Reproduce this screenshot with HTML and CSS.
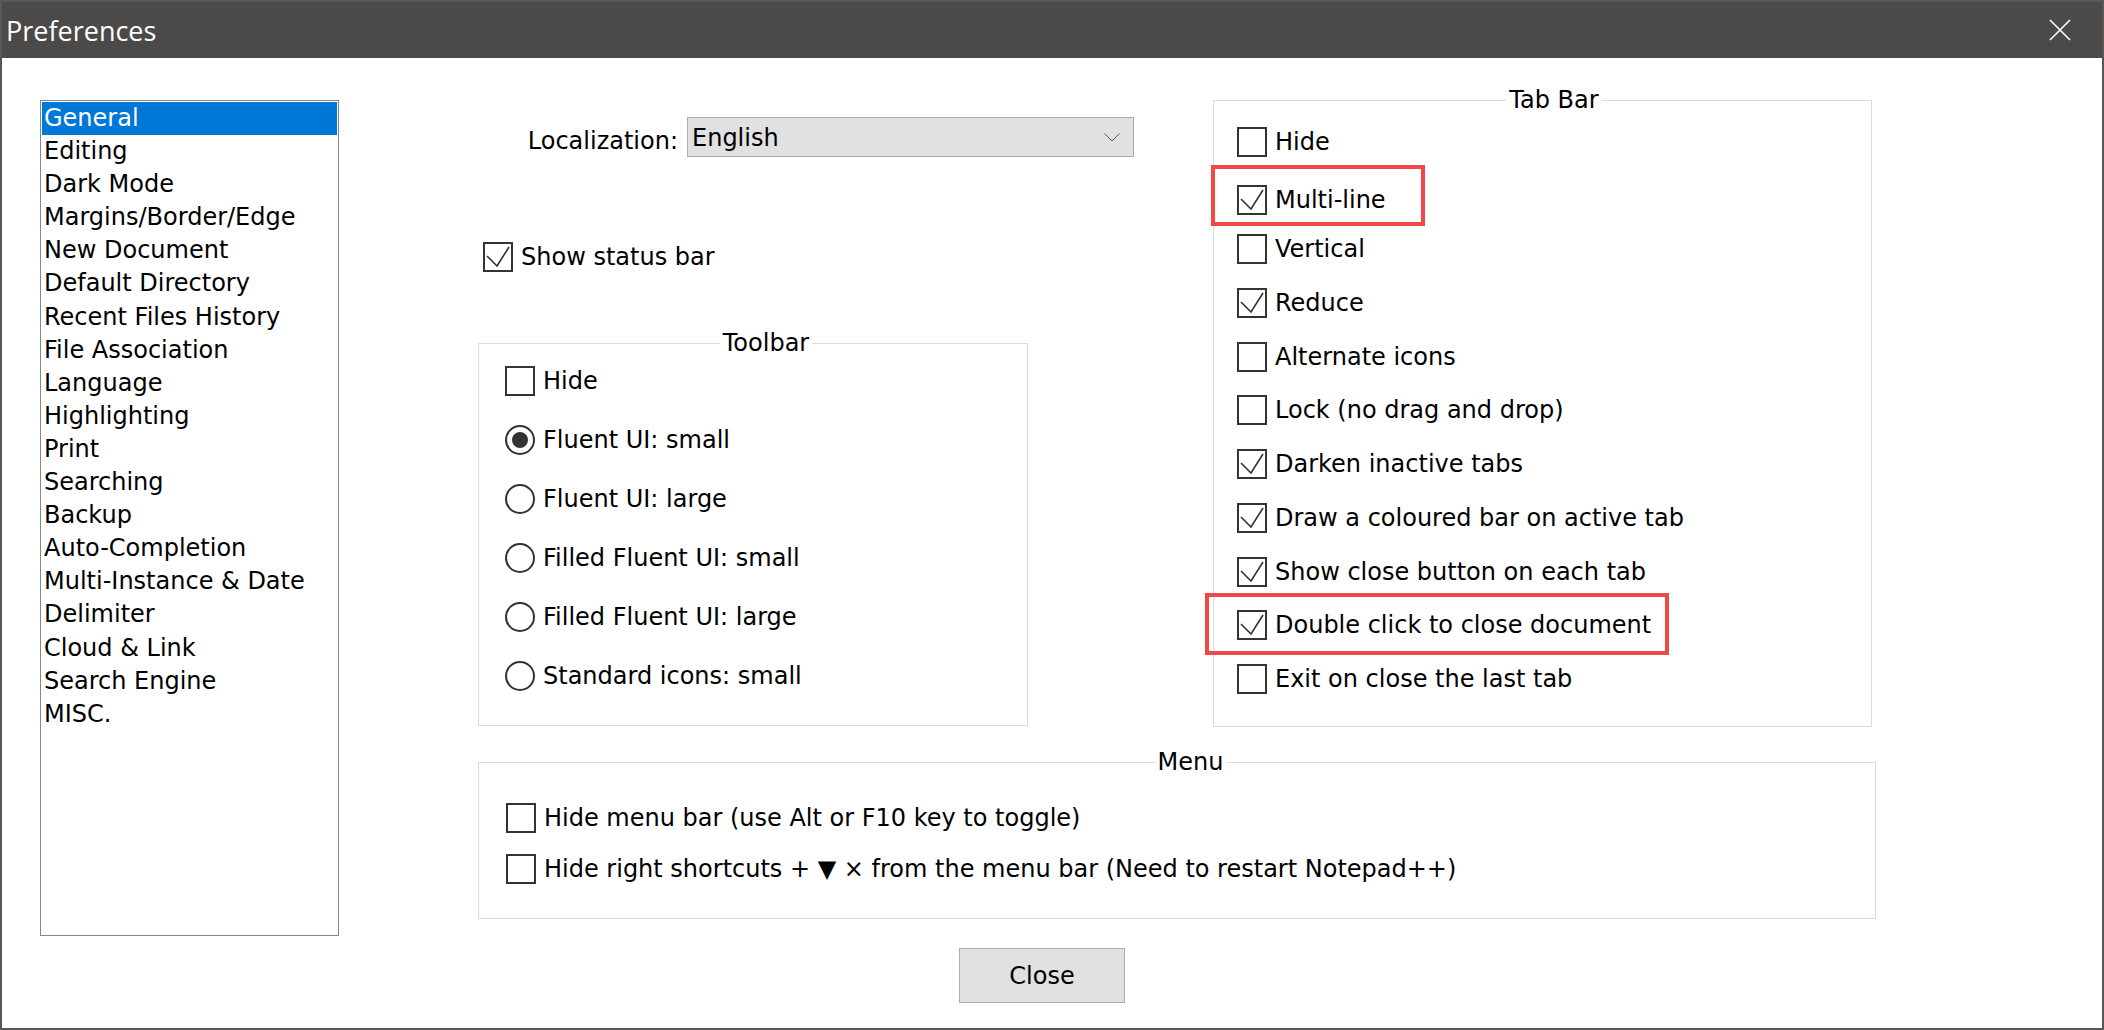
FILE: index.html
```html
<!DOCTYPE html>
<html>
<head>
  <title>Preferences</title>
  <meta charset="utf-8">
  <link rel="stylesheet" href="styles.css">
</head>
<body>
  <div class="window">
    <div class="titlebar">
      <span class="title">Preferences</span>
      <span class="title-close">
        <svg width="22" height="22" viewBox="0 0 22 22"><path d="M1 1 L21 21 M21 1 L1 21"/></svg>
      </span>
    </div>

    <div class="content">
      <ul class="categories">
        <li class="selected">General</li>
        <li>Editing</li>
        <li>Dark Mode</li>
        <li>Margins/Border/Edge</li>
        <li>New Document</li>
        <li>Default Directory</li>
        <li>Recent Files History</li>
        <li>File Association</li>
        <li>Language</li>
        <li>Highlighting</li>
        <li>Print</li>
        <li>Searching</li>
        <li>Backup</li>
        <li>Auto-Completion</li>
        <li>Multi-Instance &amp; Date</li>
        <li>Delimiter</li>
        <li>Cloud &amp; Link</li>
        <li>Search Engine</li>
        <li>MISC.</li>
      </ul>

      <div class="panel">
        <div class="top-row">
          <div class="general-col">
            <div class="lang-row">
              <span class="lang-label">Localization:</span>
              <div class="combo">
                <span>English</span>
                <svg width="16" height="9" viewBox="0 0 16 9"><polyline points="0.5,0.5 8,8 15.5,0.5"/></svg>
              </div>
            </div>

            <div class="option status-row">
              <span class="box"><svg viewBox="0 0 26 26"><polyline points="2,12 12,22 24,3"/></svg></span>
              <span>Show status bar</span>
            </div>

            <fieldset class="group toolbar-group">
              <legend>Toolbar</legend>
              <div class="options">
                <div class="option"><span class="box"></span><span>Hide</span></div>
                <div class="option"><span class="radio checked"></span><span>Fluent UI: small</span></div>
                <div class="option"><span class="radio"></span><span>Fluent UI: large</span></div>
                <div class="option"><span class="radio"></span><span>Filled Fluent UI: small</span></div>
                <div class="option"><span class="radio"></span><span>Filled Fluent UI: large</span></div>
                <div class="option"><span class="radio"></span><span>Standard icons: small</span></div>
              </div>
            </fieldset>
          </div>

          <fieldset class="group tabbar-group">
            <legend>Tab Bar</legend>
            <div class="options">
              <div class="option"><span class="box"></span><span>Hide</span></div>
              <div class="option marked mark-multiline"><span class="box"><svg viewBox="0 0 26 26"><polyline points="2,12 12,22 24,3"/></svg></span><span>Multi-line</span></div>
              <div class="option"><span class="box"></span><span>Vertical</span></div>
              <div class="option"><span class="box"><svg viewBox="0 0 26 26"><polyline points="2,12 12,22 24,3"/></svg></span><span>Reduce</span></div>
              <div class="option"><span class="box"></span><span>Alternate icons</span></div>
              <div class="option"><span class="box"></span><span>Lock (no drag and drop)</span></div>
              <div class="option"><span class="box"><svg viewBox="0 0 26 26"><polyline points="2,12 12,22 24,3"/></svg></span><span>Darken inactive tabs</span></div>
              <div class="option"><span class="box"><svg viewBox="0 0 26 26"><polyline points="2,12 12,22 24,3"/></svg></span><span>Draw a coloured bar on active tab</span></div>
              <div class="option"><span class="box"><svg viewBox="0 0 26 26"><polyline points="2,12 12,22 24,3"/></svg></span><span>Show close button on each tab</span></div>
              <div class="option marked mark-dblclick"><span class="box"><svg viewBox="0 0 26 26"><polyline points="2,12 12,22 24,3"/></svg></span><span>Double click to close document</span></div>
              <div class="option"><span class="box"></span><span>Exit on close the last tab</span></div>
            </div>
          </fieldset>
        </div>

        <fieldset class="group menu-group">
          <legend>Menu</legend>
          <div class="options">
            <div class="option"><span class="box"></span><span>Hide menu bar (use Alt or F10 key to toggle)</span></div>
            <div class="option"><span class="box"></span><span>Hide right shortcuts + ▼ × from the menu bar (Need to restart Notepad++)</span></div>
          </div>
        </fieldset>

        <div class="actions">
          <button class="close-button">Close</button>
        </div>
      </div>
    </div>
  </div>
</body>
</html>
```

FILE: styles.css
```css
*, *::before, *::after {
  box-sizing: border-box;
}
body {
  margin: 0;
  font-family: "DejaVu Sans", Tahoma, sans-serif;
  font-size: 24px;
  color: #000;
  background: #fff;
}
.window {
  width: 2104px;
  height: 1030px;
  border: 2px solid #575757;
  display: flex;
  flex-direction: column;
  background: #fff;
}
.titlebar {
  height: 56px;
  flex: none;
  background: #4c4a48;
  color: #fff;
  display: flex;
  align-items: center;
  justify-content: space-between;
}
.title {
  font-family: "Open Sans", sans-serif;
  font-size: 27px;
  padding-left: 4px;
}
.title-close {
  width: 84px;
  height: 56px;
  display: flex;
  align-items: center;
  justify-content: center;
}
.title-close svg path {
  stroke: #fff;
  stroke-width: 1.6;
  fill: none;
}
.content {
  flex: 1;
  display: flex;
  padding: 28px 0 0 38px;
}

/* left list */
.categories {
  list-style: none;
  margin: 14px 0 0;
  padding: 1px;
  width: 299px;
  height: 836px;
  border: 1px solid #828790;
  flex: none;
}
.categories li {
  height: 33.1px;
  line-height: 33px;
  padding-left: 2px;
  white-space: nowrap;
}
.categories li.selected {
  background: #0078d7;
  color: #fff;
}

/* right panel */
.panel {
  margin-left: 139px;
  width: 1398px;
  flex: none;
}
.top-row {
  display: flex;
  align-items: flex-start;
}
.general-col {
  width: 550px;
  flex: none;
}
.lang-row {
  display: flex;
  align-items: flex-start;
  height: 40px;
  margin-top: 31px;
}
.lang-label {
  flex: none;
  width: 209px;
  text-align: right;
  padding-right: 9px;
  line-height: 48px;
}
.combo {
  flex: none;
  width: 447px;
  height: 40px;
  background: #e1e1e1;
  border: 1px solid #adadad;
  display: flex;
  align-items: center;
  justify-content: space-between;
  padding: 1px 13px 0 4px;
}
.combo svg {
  margin-top: -1px;
}
.combo svg polyline {
  stroke: #555;
  stroke-width: 1;
  fill: none;
}

/* checkboxes, radios */
.option {
  display: flex;
  align-items: center;
  gap: 8px;
  height: 34px;
  white-space: nowrap;
  align-self: flex-start;
}
.box {
  width: 30px;
  height: 30px;
  flex: none;
  border: 2px solid #333;
  background: #fff;
}
.box svg {
  display: block;
  width: 26px;
  height: 26px;
}
.box svg polyline {
  stroke: #333;
  stroke-width: 1.6;
  fill: none;
}
.radio {
  width: 30px;
  height: 30px;
  flex: none;
  border: 2px solid #333;
  border-radius: 50%;
  display: flex;
  align-items: center;
  justify-content: center;
}
.radio.checked::after {
  content: "";
  width: 16px;
  height: 16px;
  border-radius: 50%;
  background: #333;
}
.status-row {
  margin-top: 83px;
  margin-left: 5px;
}

/* group boxes */
.group {
  margin: 0;
  border: 1px solid #dcdcdc;
  min-width: 0;
}
.group legend {
  margin: 0 auto;
  padding: 0 3px;
  line-height: 28px;
}
.options {
  display: flex;
  flex-direction: column;
}
.toolbar-group {
  margin-top: 55px;
  height: 397px;
  padding: 7px 0 0 26px;
}
.toolbar-group .options {
  gap: 25px;
}
.tabbar-group {
  flex: none;
  margin-left: 185px;
  width: 659px;
  height: 641px;
  padding: 11px 0 0 23px;
}
.tabbar-group .options {
  gap: 19.7px;
}
.tabbar-group .mark-multiline {
  margin-top: 4px;
  margin-bottom: -4px;
}
.menu-group {
  margin-top: 21px;
  width: 1398px;
  height: 171px;
  padding: 25px 0 0 27px;
}
.menu-group .options {
  gap: 17px;
}

/* red annotation boxes drawn over the rows */
.marked {
  position: relative;
}
.marked::after {
  content: "";
  position: absolute;
  border: 4px solid #f04747;
  pointer-events: none;
}
.mark-multiline::after {
  left: -26px;
  top: -18px;
  width: 214px;
  height: 61px;
}
.mark-dblclick::after {
  left: -32px;
  top: -15px;
  width: 464px;
  height: 62px;
}

.actions {
  margin-top: 29px;
  padding-left: 481px;
}
.close-button {
  width: 166px;
  height: 55px;
  background: #e1e1e1;
  border: 1px solid #adadad;
  font-family: inherit;
  font-size: 24px;
  color: #000;
  padding: 0;
}
```
